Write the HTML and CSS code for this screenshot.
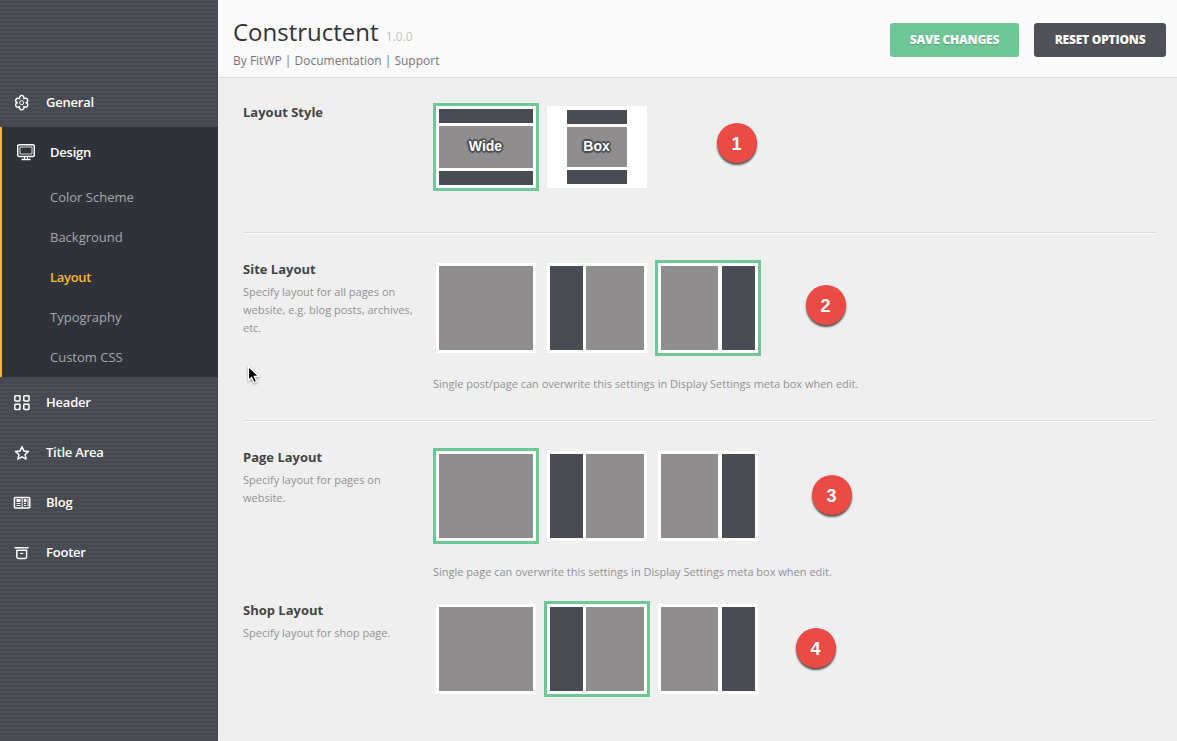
FILE: index.html
```html
<!DOCTYPE html>
<html lang="en">
<head>
<meta charset="utf-8">
<title>Constructent</title>
<link rel="stylesheet" href="styles.css">
</head>
<body>
<div class="app">
  <aside class="sidebar">
    <nav>
      <a class="item"><svg class="icon" viewBox="0 0 18 18"><path d="M6.500 5.800A2.300 2.500 0 1 1 10.900 5.800A2.300 2.300 0 1 1 13.100 9.700A2.300 2.300 0 1 1 10.900 13.600A2.300 2.500 0 1 1 6.500 13.600A2.300 2.300 0 1 1 4.300 9.700A2.300 2.300 0 1 1 6.500 5.800Z"/><circle cx="8.700" cy="9.700" r="2" stroke-width="1"/></svg><span>General</span></a>
      <div class="group">
        <a class="item"><svg class="icon" viewBox="0 0 18 18"><rect x=".7" y="1.700" width="16.600" height="11.800" rx="1.500"/><rect x="3" y="4" width="12" height="7" stroke-width=".8"/><path d="M7.500 13.500V16M10.500 13.500V16" stroke-width="1"/><path d="M4.500 16.500H13.500"/></svg><span>Design</span></a>
        <a class="sub">Color Scheme</a>
        <a class="sub">Background</a>
        <a class="sub current">Layout</a>
        <a class="sub">Typography</a>
        <a class="sub">Custom CSS</a>
      </div>
      <a class="item"><svg class="icon" viewBox="0 0 18 18"><rect x="1.800" y="2.800" width="5.200" height="5.200" rx=".7"/><rect x="10.800" y="2.800" width="5.200" height="5.200" rx=".7"/><rect x="1.800" y="11.300" width="5.200" height="5.200" rx=".7"/><rect x="10.800" y="11.300" width="5.200" height="5.200" rx=".7"/></svg><span>Header</span></a>
      <a class="item"><svg class="icon" viewBox="0 0 18 18"><path d="M9 3.600L10.900 7.900L15.500 8.400L12.100 11.500L13.100 16.100L9 13.800L4.900 16.100L5.900 11.500L2.500 8.400L7.100 7.900Z"/></svg><span>Title Area</span></a>
      <a class="item"><svg class="icon" viewBox="0 0 18 18"><rect x="1.400" y="4.500" width="15.400" height="10.600" rx="1"/><path d="M9.200 4.500V15M3.500 10.500H7.500M3.500 12.500H7.500M11 10.500H13M11 12.500H13M15 6V13.500" stroke-width="1"/><path d="M3.500 7.500H7.500M10.800 7.500H13.500" stroke-width="3"/></svg><span>Blog</span></a>
      <a class="item"><svg class="icon" viewBox="0 0 18 18"><path d="M1.600 4.700H15.600M3.800 7.200V13.700Q3.800 15.400 5.300 15.400H12.100Q13.600 15.400 13.600 13.700V7.200Z"/><path d="M7.100 10.500H10.300" stroke-width="1.200"/></svg><span>Footer</span></a>
    </nav>
  </aside>
  <main class="main">
    <header class="header">
      <div>
        <h1 class="title">Constructent <small class="version">1.0.0</small></h1>
        <p class="links">By FitWP | Documentation | Support</p>
      </div>
      <div class="actions"><button class="btn save">Save Changes</button><button class="btn reset">Reset Options</button></div>
    </header>
    <section class="row style-row">
      <div class="label"><h2>Layout Style</h2></div>
      <div class="thumbs">
        <div class="thumb stack selected"><i class="dark"></i><i class="gray"><b>Wide</b></i><i class="dark"></i></div>
        <div class="thumb stack box"><i class="dark"></i><i class="gray"><b>Box</b></i><i class="dark"></i></div>
      </div>
      <span class="badge b1">1</span>
    </section>
    <section class="row site-row">
      <div class="label"><h2>Site Layout</h2><p>Specify layout for all pages on website, e.g. blog posts, archives, etc.</p></div>
      <div>
        <div class="thumbs">
          <div class="thumb"><i class="gray"></i></div>
          <div class="thumb left"><i class="dark"></i><i class="gray"></i></div>
          <div class="thumb right selected"><i class="gray"></i><i class="dark"></i></div>
        </div>
        <p class="note">Single post/page can overwrite this settings in Display Settings meta box when edit.</p>
      </div>
      <span class="badge b2">2</span>
      <svg class="cursor" viewBox="0 0 14 20"><path d="M1.500 1.500V15.300L4.700 12.400L7 17.600L9.600 16.500L7.300 11.400H11.700Z"/></svg>
    </section>
    <section class="row page-row">
      <div class="label"><h2>Page Layout</h2><p>Specify layout for pages on website.</p></div>
      <div>
        <div class="thumbs">
          <div class="thumb selected"><i class="gray"></i></div>
          <div class="thumb left"><i class="dark"></i><i class="gray"></i></div>
          <div class="thumb right"><i class="gray"></i><i class="dark"></i></div>
        </div>
        <p class="note">Single page can overwrite this settings in Display Settings meta box when edit.</p>
      </div>
      <span class="badge b3">3</span>
    </section>
    <section class="row shop-row">
      <div class="label"><h2>Shop Layout</h2><p>Specify layout for shop page.</p></div>
      <div class="thumbs">
        <div class="thumb"><i class="gray"></i></div>
        <div class="thumb left selected"><i class="dark"></i><i class="gray"></i></div>
        <div class="thumb right"><i class="gray"></i><i class="dark"></i></div>
      </div>
      <span class="badge b4">4</span>
    </section>
  </main>
</div>
</body>
</html>
```
FILE: styles.css
```css
* { box-sizing: border-box; }
body { margin: 0; font-family: "Open Sans", sans-serif; background: #efefef; }
h1, h2, p { margin: 0; }
.app { display: flex; width: 1177px; height: 741px; overflow: hidden; }
.sidebar {
  width: 218px;
  padding-top: 77px;
  background-color: #4a4c54;
  background-image: radial-gradient(circle, #45474e 0.7px, transparent 1px);
  background-size: 4px 4px;
}
.item { display: flex; align-items: center; height: 50px; padding-left: 13px; color: #fff; font-size: 13px; font-weight: 600; letter-spacing: -0.22px; }
.icon { width: 18px; height: 18px; margin-right: 15px; fill: none; stroke: #fff; stroke-width: 1.5; stroke-linejoin: round; }
.group { height: 250px; background: #303239; border-left: 2px solid #fdb92c; }
.group .item { padding-left: 15px; }
.sub { display: block; height: 40px; line-height: 40px; padding-left: 48px; color: #a5a6a9; font-size: 13px; }
.current { color: #fdb92c; font-weight: 600; letter-spacing: -0.3px; }
.main { flex: 1; }
.header { display: flex; justify-content: space-between; height: 78px; padding: 0 11px 0 15px; background: #fafafa; border-bottom: 1px solid #dcdcdc; }
.title { height: 51px; padding-top: 14px; font-size: 24px; line-height: 36px; font-weight: 400; color: #333; }
.version { font-size: 12px; color: #c4c4c4; margin-left: 1px; }
.links { font-size: 12px; line-height: 20px; color: #777; }
.actions { display: flex; gap: 15px; padding-top: 23px; }
.btn { height: 34px; padding: 0 0 2px; border: 0; border-radius: 3px; color: #fff; font: 800 12px "Open Sans", sans-serif; letter-spacing: -0.2px; text-transform: uppercase; text-shadow: 0 1px 1px rgba(0,0,0,.2); }
.save { width: 129px; background: #6dc796; }
.reset { width: 132px; background: #515259; }
.row { position: relative; display: flex; margin: 0 21px 0 25px; }
.style-row { height: 155px; padding-top: 25px; border-bottom: 1px solid #dcdcdc; box-shadow: 0 1px 0 #fafafa; }
.site-row { height: 188px; padding-top: 27px; border-bottom: 1px solid #dcdcdc; box-shadow: 0 1px 0 #fafafa; }
.page-row { height: 153px; padding-top: 27px; }
.shop-row { height: 120px; padding-top: 27px; }
.label { width: 190px; padding-right: 15px; }
.label h2 { font-size: 13px; line-height: 18px; font-weight: 700; color: #444; }
.label p { margin-top: 5px; font-size: 11px; line-height: 18px; color: #929292; }
.thumbs { display: flex; gap: 5px; height: 96px; }
.style-row .thumbs { height: 88px; }
.thumb { display: flex; width: 106px; padding: 3px; border: 3px solid transparent; background: #fff; background-clip: padding-box; }
.selected { border-color: #6dc796; }
.thumb .gray { flex: 1; }
.left { gap: 3px; }
.right { gap: 4px; }
.left .dark, .right .dark { width: 33px; }
.stack { flex-direction: column; gap: 3px; }
.stack .dark { height: 14px; }
.box { padding: 4px 20px; }
.gray { display: flex; align-items: center; justify-content: center; background: #8f8d8e; }
.dark { background: #4a4c54; }
.stack b { padding: 0 1px 2px 0; font: 700 14px "Liberation Sans", sans-serif; color: #fff; text-shadow: -1px -1px 1px #4a4c54, 1px -1px 1px #4a4c54, -1px 1px 1px #4a4c54, 1px 1px 1px #4a4c54, 0 2px 1px #4a4c54, 2px 0 1px #4a4c54, -2px 0 1px #4a4c54, 0 -2px 1px #4a4c54; }
.note { margin-top: 19px; font-size: 11px; line-height: 18px; color: #929292; }
.badge { position: absolute; width: 40px; height: 40px; padding-right: 1px; border-radius: 50%; background: #ea4b45; color: #fff; font: 700 18px/42px "Liberation Sans", sans-serif; text-align: center; box-shadow: 0 2px 2px rgba(0,0,0,.65); }
.b1 { left: 474px; top: 45px; }
.b2 { left: 563px; top: 52px; }
.b3 { left: 569px; top: 54px; }
.b4 { left: 553px; top: 54px; }
.cursor { position: absolute; left: 4px; top: 132px; width: 14px; height: 20px; stroke: #fff; stroke-width: 1.2; filter: drop-shadow(0 1px 1px rgba(0,0,0,.4)); }
```
